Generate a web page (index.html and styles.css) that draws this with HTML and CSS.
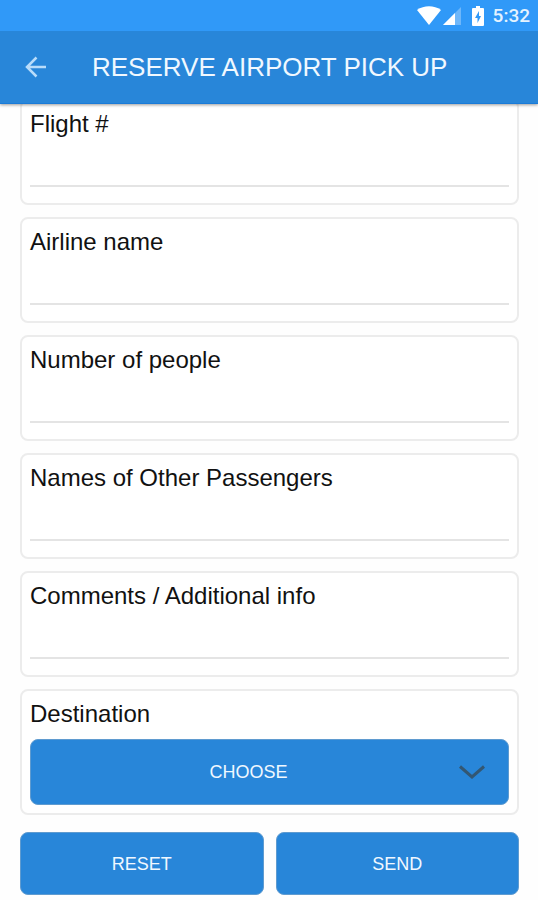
FILE: index.html
```html
<!DOCTYPE html>
<html lang="en">
<head>
<meta charset="utf-8">
<meta name="viewport" content="width=device-width, initial-scale=1">
<title>Reserve Airport Pick Up</title>
<link rel="stylesheet" href="styles.css">
</head>
<body>
<div class="top">
  <div class="status">
    <svg class="status-wifi" viewBox="0 0 24 19" aria-hidden="true"><path d="M0 4C7-1 17-1 24 4L12 19Z" fill="#fff"/></svg>
    <svg class="status-signal" viewBox="0 0 18 18" aria-hidden="true"><path d="M0 18L18 0V18Z" fill="#fff" opacity=".3"/><path d="M0 18L12 6V18Z" fill="#fff"/></svg>
    <svg class="status-battery" viewBox="0 0 12 20" aria-hidden="true"><path fill="#fff" fill-rule="evenodd" d="M4 0H8V2H11Q12 2 12 3V19Q12 20 11 20H1Q0 20 0 19V3Q0 2 1 2H4ZM7 5L3 12H5.500V17L9 10H7Z"/></svg>
    <span class="status-time">5:32</span>
  </div>
  <header class="header">
    <button class="back" type="button" aria-label="Back">
      <svg viewBox="0 0 22 22" aria-hidden="true"><path d="M21 11H2M11.500 1.500L2 11L11.500 20.500" fill="none" stroke="#b9dcfa" stroke-width="2.500"/></svg>
    </button>
    <h1 class="title">RESERVE AIRPORT PICK UP</h1>
  </header>
</div>
<form class="form">
  <div class="card">
    <label class="label" for="flight">Flight #</label>
    <input class="field" id="flight" type="text">
  </div>
  <div class="card">
    <label class="label" for="airline">Airline name</label>
    <input class="field" id="airline" type="text">
  </div>
  <div class="card">
    <label class="label" for="people">Number of people</label>
    <input class="field" id="people" type="text" inputmode="numeric">
  </div>
  <div class="card">
    <label class="label" for="passengers">Names of Other Passengers</label>
    <input class="field" id="passengers" type="text">
  </div>
  <div class="card">
    <label class="label" for="comments">Comments / Additional info</label>
    <input class="field" id="comments" type="text">
  </div>
  <div class="card">
    <label class="label" for="destination">Destination</label>
    <div class="picker">
      <select class="button select" id="destination">
        <option>CHOOSE</option>
      </select>
      <svg class="chevron" viewBox="0 0 26 14" aria-hidden="true"><path d="M1 1.500L13 12L25 1.500" fill="none" stroke="#335773" stroke-width="3"/></svg>
    </div>
  </div>
  <div class="actions">
    <button class="button" type="reset">RESET</button>
    <button class="button" type="submit">SEND</button>
  </div>
</form>
</body>
</html>
```
FILE: styles.css
```css
* {
  box-sizing: border-box;
}

body {
  margin: 0;
  background: #fefefe;
  color: #111;
  font-family: "Liberation Sans", Arial, sans-serif;
}

.top {
  position: sticky;
  top: 0;
  z-index: 1;
  box-shadow: 0 1px 3px rgba(0, 0, 0, 0.4);
}

.status {
  display: flex;
  align-items: center;
  justify-content: flex-end;
  height: 31px;
  padding: 0 8px;
  background: #3099f8;
  color: #e4f3ff;
}

.status-wifi {
  width: 24px;
  height: 19px;
}

.status-signal {
  width: 18px;
  height: 18px;
  margin-left: 2px;
}

.status-battery {
  width: 12px;
  height: 20px;
  margin-left: 11px;
}

.status-time {
  margin-left: 9px;
  font: 500 19px/24px Roboto, "Liberation Sans", sans-serif;
}

.header {
  display: flex;
  align-items: center;
  height: 73px;
  padding: 0 24px;
  border-bottom: 1px solid #1a7bd8;
  background: #2886d9;
}

.back {
  display: flex;
  padding: 0;
  border: 0;
  background: none;
}

.back svg {
  width: 24px;
  height: 22px;
}

.title {
  margin: 0 0 0 44px;
  color: #f0f8ff;
  font-size: 26px;
  font-weight: 400;
  line-height: 32px;
  white-space: nowrap;
}

/* The list is scrolled slightly under the header. */
.form {
  display: flex;
  flex-direction: column;
  gap: 12px;
  margin-top: -5px;
  padding: 0 19px 4px 20px;
}

.card {
  padding: 8px;
  border: 2px solid #ececec;
  border-radius: 8px;
  background: #fff;
}

.label {
  display: block;
  font-size: 24px;
  line-height: 30px;
}

.field {
  display: block;
  width: 100%;
  height: 48px;
  margin-bottom: 8px;
  padding: 0;
  border: 0;
  border-bottom: 2px solid #e4e4e4;
  background: none;
  font: inherit;
  font-size: 24px;
  outline: none;
}

.picker {
  position: relative;
  margin-top: 10px;
}

.button {
  display: block;
  width: 100%;
  height: 63px;
  padding: 0;
  border: 1px solid #5f9bd0;
  border-radius: 8px;
  background: #2886d9;
  color: #f0f8ff;
  font: 18px/24px "Liberation Sans", Arial, sans-serif;
  text-align: center;
}

.select {
  height: 66px;
  padding-right: 42px;
  appearance: none;
  text-align-last: center;
}

.chevron {
  position: absolute;
  top: 50%;
  right: 24px;
  width: 26px;
  height: 14px;
  transform: translateY(-50%);
  pointer-events: none;
}

.actions {
  display: grid;
  grid-template-columns: 1fr 1fr;
  gap: 12px;
  padding-top: 5px;
}
```
